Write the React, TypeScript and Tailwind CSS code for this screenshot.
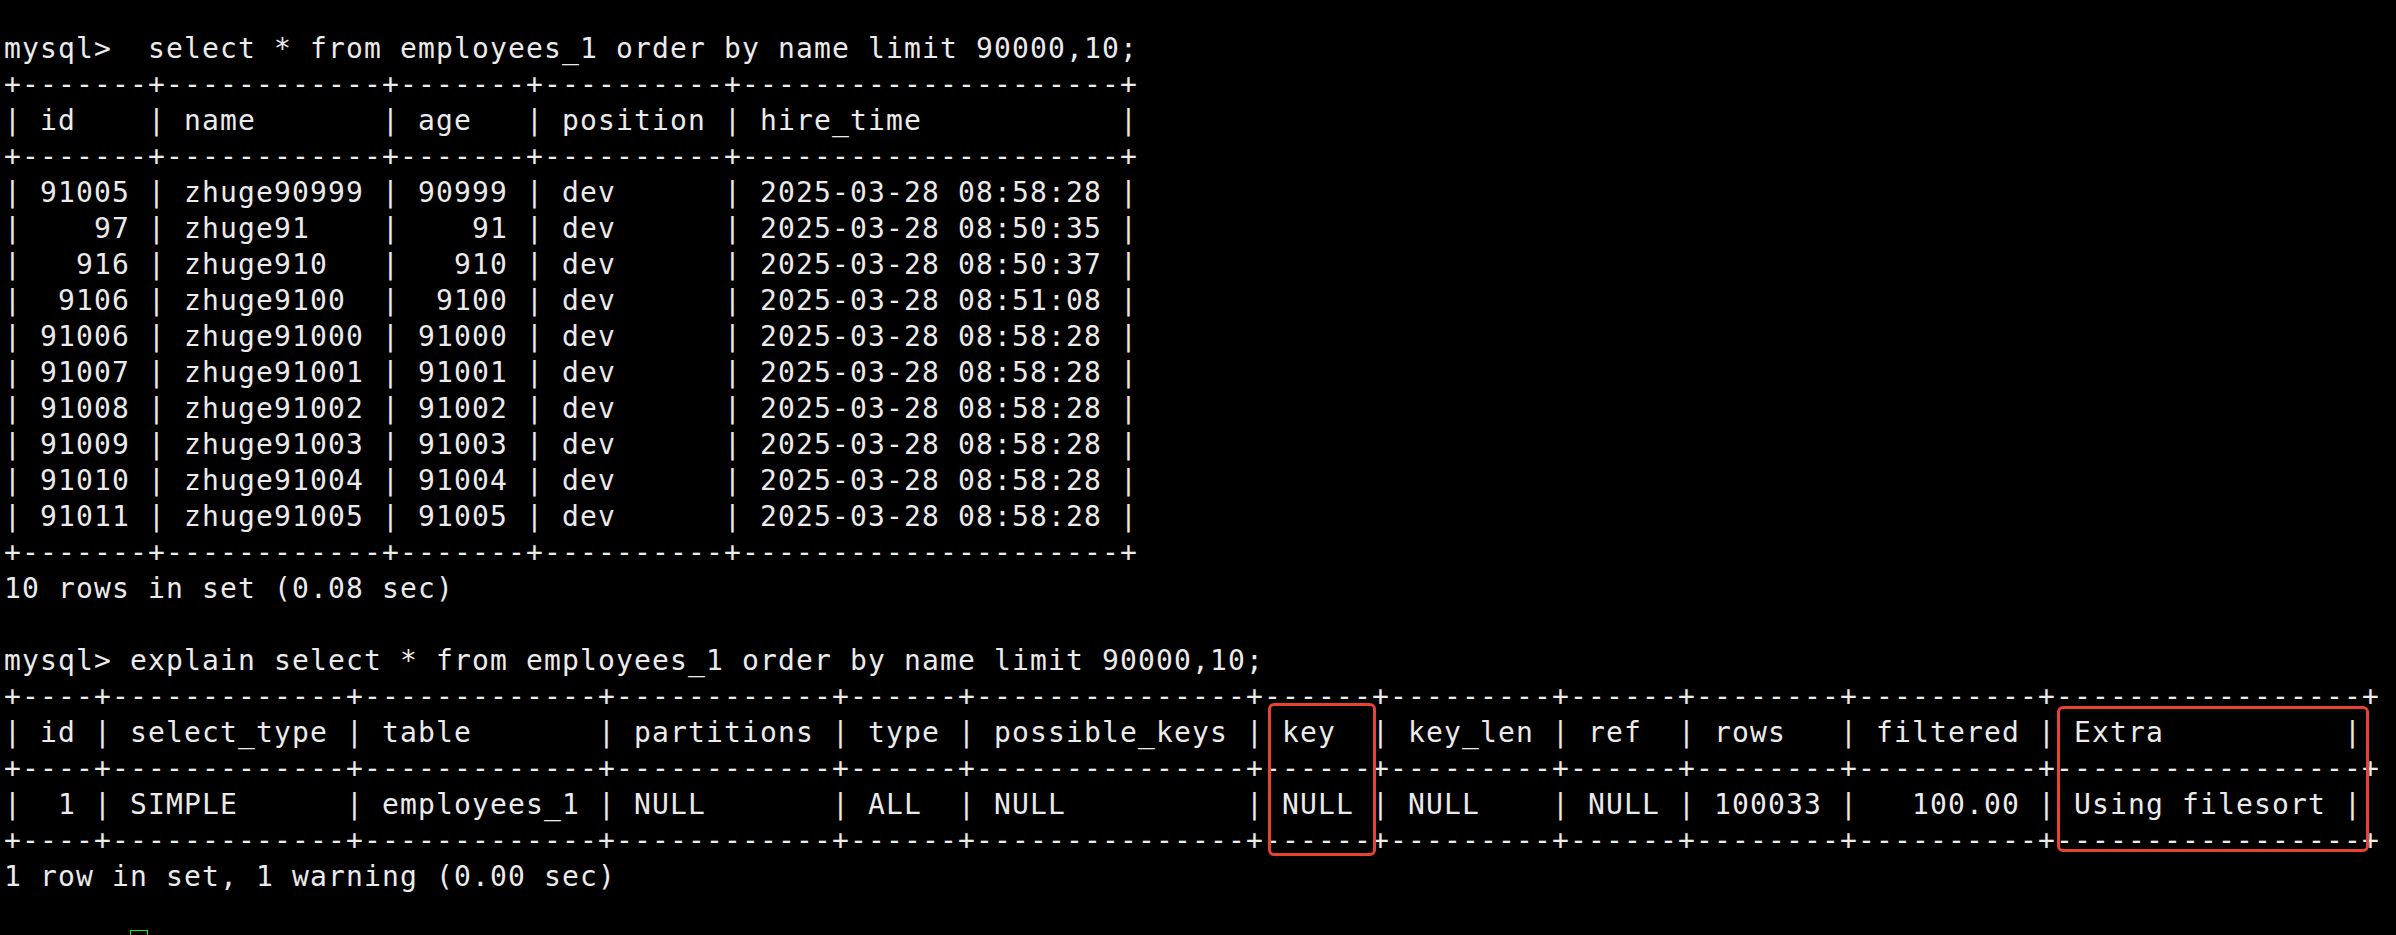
import React from 'react';

const border1 = '+-------+------------+-------+----------+---------------------+';
const border2 =
  '+----+-------------+-------------+------------+------+---------------+------+---------+------+--------+----------+-----------------+';

const lines: string[] = [
  'mysql>  select * from employees_1 order by name limit 90000,10;',
  border1,
  '| id    | name       | age   | position | hire_time           |',
  border1,
  '| 91005 | zhuge90999 | 90999 | dev      | 2025-03-28 08:58:28 |',
  '|    97 | zhuge91    |    91 | dev      | 2025-03-28 08:50:35 |',
  '|   916 | zhuge910   |   910 | dev      | 2025-03-28 08:50:37 |',
  '|  9106 | zhuge9100  |  9100 | dev      | 2025-03-28 08:51:08 |',
  '| 91006 | zhuge91000 | 91000 | dev      | 2025-03-28 08:58:28 |',
  '| 91007 | zhuge91001 | 91001 | dev      | 2025-03-28 08:58:28 |',
  '| 91008 | zhuge91002 | 91002 | dev      | 2025-03-28 08:58:28 |',
  '| 91009 | zhuge91003 | 91003 | dev      | 2025-03-28 08:58:28 |',
  '| 91010 | zhuge91004 | 91004 | dev      | 2025-03-28 08:58:28 |',
  '| 91011 | zhuge91005 | 91005 | dev      | 2025-03-28 08:58:28 |',
  border1,
  '10 rows in set (0.08 sec)',
  '',
  'mysql> explain select * from employees_1 order by name limit 90000,10;',
  border2,
  '| id | select_type | table       | partitions | type | possible_keys | key  | key_len | ref  | rows   | filtered | Extra          |',
  border2,
  '|  1 | SIMPLE      | employees_1 | NULL       | ALL  | NULL          | NULL | NULL    | NULL | 100033 |   100.00 | Using filesort |',
  border2,
  '1 row in set, 1 warning (0.00 sec)',
  '',
];

export default function App() {
  return (
    <div className="relative h-[935px] w-full overflow-hidden bg-black pl-[4px] pt-[31px] font-['DejaVu_Sans_Mono',monospace] text-[28px] tracking-[1.143px] text-[#ebebeb]">
      {lines.map((line, i) => (
        <div key={i} className="h-[36px] whitespace-pre leading-[36px]">
          {line}
        </div>
      ))}
      {/* next prompt line sits below the fold, only the cursor top shows */}
      <div className="flex h-[36px] pl-[126px]">
        <span className="mt-[-1px] h-[34px] w-[18px] border border-[#00ff00]" />
      </div>

      {/* annotation boxes */}
      <div className="absolute left-[1268px] top-[703px] h-[153px] w-[108px] rounded-[6px] border-[3px] border-[#e8432e]" />
      <div className="absolute left-[2057px] top-[706px] h-[146px] w-[312px] rounded-[6px] border-[3px] border-[#e8432e]" />
    </div>
  );
}
